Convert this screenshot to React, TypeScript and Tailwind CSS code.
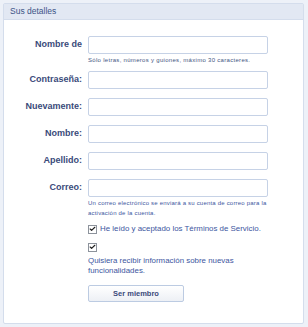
import { Check } from 'lucide-react';

const fields = [
  { label: 'Contraseña:' },
  { label: 'Nuevamente:' },
  { label: 'Nombre:' },
  { label: 'Apellido:' },
];

function Label({ children }: { children: React.ReactNode }) {
  return (
    <label className="w-[78px] shrink-0 text-right text-[9px] font-bold text-[#3a4a7a]">
      {children}
    </label>
  );
}

function Input() {
  return (
    <input
      type="text"
      className="w-[180px] h-[18px] bg-white border border-[#c6d2e6] rounded-[2px] outline-none"
    />
  );
}

function Box() {
  return (
    <span className="w-[9px] h-[9px] shrink-0 bg-white border border-[#8d939c] flex items-center justify-center">
      <Check size={8} strokeWidth={4} className="text-[#222]" />
    </span>
  );
}

export default function App() {
  return (
    <div
      className="w-[308px] h-[327px] bg-[#edf1f8] pt-[3px] px-[3px]"
      style={{ fontFamily: '"Liberation Sans", Arial, sans-serif' }}
    >
      <div className="w-[301px] h-[321px] bg-white border border-[#d4ddec] rounded-[2px]">
        <div className="h-[16px] bg-[#e2e8f3] border-b border-[#d4ddec] px-[6px] flex items-center text-[8.5px] text-[#3d5487]">
          Sus detalles
        </div>

        <div className="pt-[16px] flex flex-col">
          <div className="flex items-center gap-[6px]">
            <Label>Nombre de</Label>
            <Input />
          </div>
          <p className="ml-[84px] mt-[1px] leading-[10px] text-[6px] tracking-[0.3px] text-[#44557f]">
            Sólo letras, números y guiones, máximo 30 caracteres.
          </p>

          <div className="mt-[6px] flex flex-col gap-[9px]">
            {fields.map((f) => (
              <div key={f.label} className="flex items-center gap-[6px]">
                <Label>{f.label}</Label>
                <Input />
              </div>
            ))}
            <div className="flex items-center gap-[6px]">
              <Label>Correo:</Label>
              <Input />
            </div>
          </div>
          <p className="ml-[84px] mt-[1px] w-[188px] leading-[10px] text-[6px] tracking-[0.2px] text-[#3d56a0]">
            Un correo electrónico se enviará a su cuenta de correo para la activación de la cuenta.
          </p>

          <div className="ml-[84px] mt-[6px] h-[10px] flex items-center gap-[3px]">
            <Box />
            <span className="text-[7.9px] text-[#3d56a0] leading-[10px]">
              He leído y aceptado los Términos de Servicio.
            </span>
          </div>

          <div className="ml-[84px] mt-[8px] h-[10px] flex items-center">
            <Box />
          </div>
          <p className="ml-[84px] mt-[4px] w-[160px] text-[7.9px] leading-[10px] text-[#3d56a0]">
            Quisiera recibir información sobre nuevas funcionalidades.
          </p>

          <button
            type="button"
            className="ml-[84px] mt-[9px] w-[96px] h-[17px] rounded-[2px] border border-[#bccbe2] bg-gradient-to-b from-white to-[#edf0f5] text-[7.5px] font-bold text-[#3a4a7a]"
          >
            Ser miembro
          </button>
        </div>
      </div>
    </div>
  );
}
